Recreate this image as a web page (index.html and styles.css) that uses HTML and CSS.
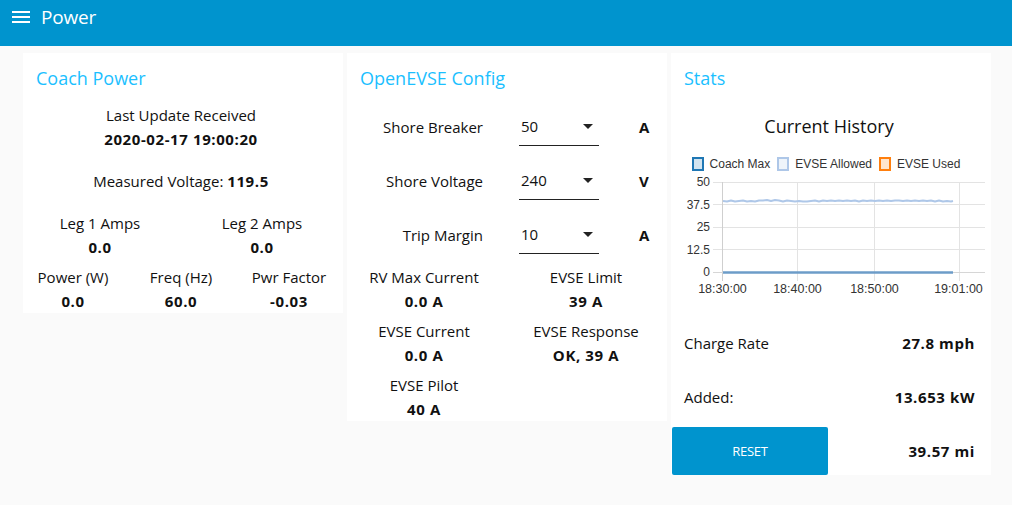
FILE: index.html
```html
<!DOCTYPE html>
<html lang="en">
<head>
<meta charset="utf-8">
<title>Power</title>
<link rel="stylesheet" href="styles.css">
</head>
<body>
<header class="toolbar">
  <div class="toolbar-row">
    <svg class="menu-icon" width="18" height="12" viewBox="0 0 18 12" aria-hidden="true">
      <rect x="0" y="0" width="18" height="2" fill="#fff"/>
      <rect x="0" y="5" width="18" height="2" fill="#fff"/>
      <rect x="0" y="10" width="18" height="2" fill="#fff"/>
    </svg>
    <span class="toolbar-title">Power</span>
  </div>
</header>

<main class="dashboard">
  <section class="card">
    <h2 class="card-title">Coach Power</h2>
    <div class="card-body">
      <div class="widget">
        <span>Last Update Received</span>
        <b class="val">2020-02-17 19:00:20</b>
      </div>
      <div class="widget">
        <span>Measured Voltage: <b class="val">119.5</b></span>
      </div>
      <div class="cols2">
        <div class="widget"><span>Leg 1 Amps</span><b class="val">0.0</b></div>
        <div class="widget"><span>Leg 2 Amps</span><b class="val">0.0</b></div>
      </div>
      <div class="cols3">
        <div class="widget"><span>Power (W)</span><b class="val">0.0</b></div>
        <div class="widget"><span>Freq (Hz)</span><b class="val">60.0</b></div>
        <div class="widget"><span>Pwr Factor</span><b class="val">-0.03</b></div>
      </div>
    </div>
  </section>

  <section class="card">
    <h2 class="card-title">OpenEVSE Config</h2>
    <div class="card-body">
      <div class="dropdown-row">
        <span class="dd-label">Shore Breaker</span>
        <div class="select"><span>50</span><i class="caret"></i></div>
        <b class="unit">A</b>
      </div>
      <div class="dropdown-row">
        <span class="dd-label">Shore Voltage</span>
        <div class="select"><span>240</span><i class="caret"></i></div>
        <b class="unit">V</b>
      </div>
      <div class="dropdown-row">
        <span class="dd-label">Trip Margin</span>
        <div class="select"><span>10</span><i class="caret"></i></div>
        <b class="unit">A</b>
      </div>
      <div class="cols2">
        <div class="widget"><span>RV Max Current</span><b class="val">0.0 A</b></div>
        <div class="widget"><span>EVSE Limit</span><b class="val">39 A</b></div>
      </div>
      <div class="cols2">
        <div class="widget"><span>EVSE Current</span><b class="val">0.0 A</b></div>
        <div class="widget"><span>EVSE Response</span><b class="val">OK, 39 A</b></div>
      </div>
      <div class="cols2">
        <div class="widget"><span>EVSE Pilot</span><b class="val">40 A</b></div>
      </div>
    </div>
  </section>

  <section class="card">
    <h2 class="card-title">Stats</h2>
    <div class="card-body">
      <div class="chart">
        <div class="chart-title">Current History</div>
        <div class="legend">
          <span class="lg-item"><i class="lg-box lg-coach"></i>Coach Max</span>
          <span class="lg-item"><i class="lg-box lg-allowed"></i>EVSE Allowed</span>
          <span class="lg-item"><i class="lg-box lg-used"></i>EVSE Used</span>
        </div>
        <svg class="plot" width="320" height="125" viewBox="0 0 320 125">
          <g stroke="#e3e3e3" stroke-width="1">
            <line x1="42" y1="10.5" x2="314" y2="10.5"/>
            <line x1="42" y1="32.5" x2="314" y2="32.5"/>
            <line x1="42" y1="55.5" x2="314" y2="55.5"/>
            <line x1="42" y1="77.5" x2="314" y2="77.5"/>
            <line x1="126.5" y1="10" x2="126.5" y2="109"/>
            <line x1="203.5" y1="10" x2="203.5" y2="109"/>
            <line x1="288.5" y1="10" x2="288.5" y2="109"/>
          </g>
          <line x1="51.5" y1="10" x2="51.5" y2="109" stroke="#cfcfcf"/>
          <line x1="42" y1="100.5" x2="314" y2="100.5" stroke="#d6d6d6"/>
          <g class="axis-text" text-anchor="end">
            <text x="39" y="14">50</text>
            <text x="39" y="36.5">37.5</text>
            <text x="39" y="59">25</text>
            <text x="39" y="81.5">12.5</text>
            <text x="39" y="104">0</text>
          </g>
          <g class="axis-text axis-x" text-anchor="middle">
            <text x="51.5" y="121">18:30:00</text>
            <text x="126.5" y="121">18:40:00</text>
            <text x="203.5" y="121">18:50:00</text>
            <text x="287.5" y="121">19:01:00</text>
          </g>
          <polyline fill="none" stroke="#aec7e8" stroke-width="2" stroke-linejoin="round"
            points="52,29 56,29.5 60,28.5 64,29.5 68,29 72,28.5 76,29.5 80,29 84,29.5 88,28.5 92,28.5 96,28 100,29 104,28 108,28.5 112,29.5 116,28.5 120,29 124,29.5 128,29 132,29.5 136,29.5 140,29 144,28.5 148,29.5 152,28.5 156,29 160,28.5 164,29 168,28.5 172,29 176,28.5 180,29 184,28.5 188,29.5 192,28.5 196,29 200,28.5 204,29 208,28.5 212,29 216,28.5 220,29 224,28.5 228,28.5 232,29 236,28.5 240,29 244,28.5 248,29 252,28.5 256,29 260,28.5 264,29.5 268,28.5 272,29.5 276,29 280,29.5 282,29"/>
          <line x1="52" y1="100.5" x2="282" y2="100.5" stroke="#6c9cc8" stroke-width="2.5"/>
        </svg>
      </div>
      <div class="spread"><span>Charge Rate</span><b class="val">27.8 mph</b></div>
      <div class="spread"><span>Added:</span><b class="val">13.653 kW</b></div>
      <div class="spread spread-btn"><button class="btn" type="button">RESET</button><b class="val">39.57 mi</b></div>
    </div>
  </section>
</main>
</body>
</html>
```
FILE: styles.css
```css
html, body {
  margin: 0;
  padding: 0;
}
body {
  background: #fafafa;
  font-family: "Open Sans", "Noto Sans", sans-serif;
  font-size: 15px;
  color: #111;
}

.toolbar {
  height: 46px;
  background: #0094ce;
  padding-left: 12px;
  box-sizing: border-box;
  color: #fff;
}
.toolbar-row {
  height: 34px;
  display: flex;
  align-items: center;
  gap: 11px;
}
.menu-icon { display: block; }
.toolbar-title {
  font-size: 19px;
  line-height: 24px;
  letter-spacing: -0.2px;
}

.dashboard {
  display: flex;
  align-items: flex-start;
  gap: 4px;
  padding: 7px 0 0 23px;
}

.card {
  width: 320px;
  background: #fff;
}
.card-title {
  margin: 0;
  padding: 13px 0 13px 13px;
  font-size: 18px;
  line-height: 24px;
  font-weight: 400;
  color: #1bbfff;
}
.card-body {
  width: 316px;
  display: flex;
  flex-direction: column;
  gap: 6px;
}

.widget {
  height: 48px;
  display: flex;
  flex-direction: column;
  align-items: center;
  justify-content: center;
  line-height: 24px;
  text-align: center;
  white-space: nowrap;
}
.val {
  font-weight: 700;
  letter-spacing: 0.6px;
}
.cols2 {
  display: grid;
  grid-template-columns: 154px 154px;
  column-gap: 8px;
}
.cols3 {
  display: grid;
  grid-template-columns: 100px 100px 100px;
  column-gap: 8px;
}

.dropdown-row {
  height: 48px;
  display: flex;
  align-items: center;
  line-height: 24px;
}
.dd-label {
  width: 136px;
  text-align: right;
}
.select {
  align-self: flex-start;
  margin-left: 36px;
  width: 80px;
  height: 43px;
  box-sizing: border-box;
  padding: 11px 6px 7px 2px;
  border-bottom: 1px solid #222;
  display: flex;
  justify-content: space-between;
  align-items: center;
}
.caret {
  width: 0;
  height: 0;
  border-top: 5px solid #222;
  border-left: 5.5px solid transparent;
  border-right: 5.5px solid transparent;
}
.unit {
  margin-left: 40px;
  font-weight: 700;
}

.chart {
  height: 210px;
  display: flex;
  flex-direction: column;
  align-items: center;
}
.chart-title {
  margin-top: 11px;
  font-size: 18px;
  line-height: 24px;
}
.legend {
  margin-top: 18px;
  height: 16px;
  display: flex;
  gap: 7px;
  font-family: "Liberation Sans", Arial, sans-serif;
  font-size: 12px;
  line-height: 16px;
  color: #333;
  margin-right: 6px;
}
.lg-item {
  display: flex;
  align-items: center;
  gap: 6px;
}
.lg-box {
  display: block;
  width: 12px;
  height: 14px;
  box-sizing: border-box;
  border: 2px solid;
}
.lg-coach { border-color: #1f77b4; background: #d2e4f0; }
.lg-allowed { border-color: #aec7e8; background: #eef4fa; }
.lg-used { border-color: #ff7f0e; background: #ffe5cf; }
.plot {
  display: block;
  align-self: flex-start;
}
.axis-text text {
  font-family: "Liberation Sans", Arial, sans-serif;
  font-size: 12px;
  fill: #333;
}
.axis-x text {
  font-size: 12.5px;
}

.spread {
  height: 48px;
  display: flex;
  align-items: center;
  justify-content: space-between;
  padding: 0 12px 0 13px;
  line-height: 24px;
}
.spread-btn {
  padding-left: 1px;
}
.btn {
  width: 156px;
  height: 48px;
  border: none;
  border-radius: 2px;
  background: #0094ce;
  color: #fff;
  font-family: "Open Sans", "Noto Sans", sans-serif;
  font-size: 13px;
  letter-spacing: -0.3px;
  padding: 0;
}
```
